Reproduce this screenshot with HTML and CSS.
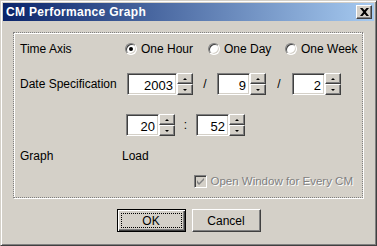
FILE: index.html
```html
<!DOCTYPE html>
<html lang="en">
<head>
    <meta charset="UTF-8">
    <title>CM Performance Graph</title>
    <link rel="stylesheet" href="styles.css">
</head>
<body>
    <div class="window">
        <div class="titlebar">
            <span class="title">CM Performance Graph</span>
            <button class="close-btn">
                <svg width="9" height="8" viewBox="0 0 9 8">
                    <path d="M0 0h2.5l2 2.2 2-2.2h2.5l-3.2 4 3.2 4h-2.5l-2-2.2-2 2.2h-2.5l3.2-4z" fill="#000"/>
                </svg>
            </button>
        </div>
        <div class="content">
            <div class="group">
                <div class="row row-axis">
                    <span class="label">Time Axis</span>
                    <span class="radio-item item-hour"><span class="radio checked"></span>One Hour</span>
                    <span class="radio-item item-day"><span class="radio"></span>One Day</span>
                    <span class="radio-item"><span class="radio"></span>One Week</span>
                </div>
                <div class="row row-date">
                    <span class="label">Date Specification</span>
                    <span class="spin">
                        <span class="edit wide">2003</span>
                        <span class="arrows"><span class="arrow up"></span><span class="arrow down"></span></span>
                    </span>
                    <span class="sep">/</span>
                    <span class="spin">
                        <span class="edit">9</span>
                        <span class="arrows"><span class="arrow up"></span><span class="arrow down"></span></span>
                    </span>
                    <span class="sep sep-day">/</span>
                    <span class="spin">
                        <span class="edit">2</span>
                        <span class="arrows"><span class="arrow up"></span><span class="arrow down"></span></span>
                    </span>
                </div>
                <div class="row row-time">
                    <span class="label"></span>
                    <span class="spin">
                        <span class="edit">20</span>
                        <span class="arrows"><span class="arrow up"></span><span class="arrow down"></span></span>
                    </span>
                    <span class="sep sep-colon">:</span>
                    <span class="spin">
                        <span class="edit">52</span>
                        <span class="arrows"><span class="arrow up"></span><span class="arrow down"></span></span>
                    </span>
                </div>
                <div class="row row-graph">
                    <span class="label">Graph</span>
                    <span>Load</span>
                </div>
                <div class="row row-check">
                    <span class="checkbox">
                        <svg width="7" height="7" viewBox="0 0 7 7">
                            <path d="M0 2v3l2 2 5-5v-2l-5 5z" fill="#808080"/>
                        </svg>
                    </span>
                    <span class="disabled-text">Open Window for Every CM</span>
                </div>
            </div>
            <div class="buttons">
                <button class="btn default"><span class="focus">OK</span></button>
                <button class="btn">Cancel</button>
            </div>
        </div>
    </div>
</body>
</html>
```

FILE: styles.css
```css
/* dialog */
body {
    margin: 0;
    font-family: "Liberation Sans", Arial, sans-serif;
    font-size: 12px;
    color: #000;
}
.window {
    width: 377px;
    height: 246px;
    box-sizing: border-box;
    background-color: #d4d0c8;
    border: 1px solid;
    border-color: #d4d0c8 #404040 #404040 #d4d0c8;
    box-shadow: inset 1px 1px #fff, inset -1px -1px #808080;
    padding: 2px;
}
.titlebar {
    height: 18px;
    display: flex;
    align-items: center;
    justify-content: space-between;
    background: linear-gradient(to right, #0a246a, #a6caf0);
    padding: 0 2px 0 3px;
}
.title {
    color: #fff;
    font-weight: bold;
    font-size: 12px;
    letter-spacing: 0.3px;
}
.close-btn {
    width: 16px;
    height: 14px;
    padding: 0;
    display: flex;
    align-items: center;
    justify-content: center;
    background-color: #d4d0c8;
    border: 1px solid;
    border-color: #fff #404040 #404040 #fff;
    box-shadow: inset -1px -1px #808080;
}
.content {
    padding: 11px 0 0 10px;
}
.group {
    width: 350px;
    height: 166px;
    box-sizing: border-box;
    border: 1px dotted #808080;
    box-shadow: inset 1px 1px #fff, 1px 1px #fff;
    padding: 8px 0 0 6px;
}
.row {
    display: flex;
    align-items: center;
}
.label {
    width: 105px;
    flex-shrink: 0;
}
.row-axis {
    height: 16px;
}
.row-date {
    height: 22px;
    margin-top: 16px;
}
.row-time {
    height: 22px;
    margin-top: 19px;
}
.row-time .label {
    width: 106px;
}
.row-date .label {
    width: 107px;
}
.row-graph {
    height: 16px;
    margin-top: 12px;
}
.row-graph .label {
    width: 102px;
}
.row-check {
    height: 14px;
    margin-top: 10px;
    justify-content: flex-end;
    padding-right: 9px;
}

/* radio buttons */
.radio-item {
    display: flex;
    align-items: center;
    gap: 4px;
}
.item-hour {
    width: 83px;
}
.item-day {
    width: 77px;
}
.radio {
    width: 10px;
    height: 10px;
    border: 1px solid;
    border-color: #808080 #fff #fff #808080;
    border-radius: 50%;
    background-color: #fff;
    box-shadow: inset 1px 1px #404040, inset -1px -1px #d4d0c8;
    position: relative;
}
.radio.checked::after {
    content: "";
    position: absolute;
    left: 3px;
    top: 3px;
    width: 4px;
    height: 4px;
    border-radius: 50%;
    background-color: #000;
}

/* spinners */
.spin {
    display: flex;
    height: 22px;
}
.edit {
    width: 33px;
    box-sizing: border-box;
    background-color: #fff;
    border: 1px solid;
    border-color: #808080 #fff #fff #808080;
    box-shadow: inset 1px 1px #404040, inset -1px -1px #d4d0c8;
    text-align: right;
    padding: 4px 3px 0 0;
    font-size: 13px;
}
.edit.wide {
    width: 50px;
}
.arrows {
    width: 16px;
    display: flex;
    flex-direction: column;
}
.arrow {
    flex: 1;
    box-sizing: border-box;
    border: 1px solid;
    border-color: #fff #404040 #404040 #fff;
    box-shadow: inset -1px -1px #808080;
    display: flex;
    align-items: center;
    justify-content: center;
}
.arrow::after {
    content: "";
    border-left: 2px solid transparent;
    border-right: 2px solid transparent;
}
.arrow.up::after {
    border-bottom: 2px solid #000;
}
.arrow.down::after {
    border-top: 2px solid #000;
}
.sep {
    width: 24px;
    text-align: center;
}
.sep-day {
    width: 26px;
}
.sep-colon {
    width: 21px;
}

/* disabled checkbox */
.checkbox {
    width: 11px;
    height: 11px;
    border: 1px solid;
    border-color: #808080 #fff #fff #808080;
    box-shadow: inset 1px 1px #404040, inset -1px -1px #d4d0c8;
    background-color: #d4d0c8;
    display: flex;
    align-items: center;
    justify-content: center;
    margin-right: 3px;
}
.disabled-text {
    color: #808080;
    text-shadow: 1px 1px #fff;
    font-size: 11.5px;
}

/* buttons */
.buttons {
    display: flex;
    justify-content: center;
    gap: 6px;
    margin: 11px 0 0 -10px;
}
.btn {
    width: 69px;
    height: 23px;
    padding: 0;
    font-family: inherit;
    font-size: 12px;
    color: #000;
    background-color: #d4d0c8;
    border: 1px solid;
    border-color: #fff #404040 #404040 #fff;
    box-shadow: inset -1px -1px #808080;
}
.btn.default {
    border: 1px solid #000;
    box-shadow: inset 1px 1px #fff, inset -1px -1px #404040, inset -2px -2px #808080;
    display: flex;
    padding: 3px;
}
.focus {
    flex: 1;
    border: 1px dotted #000;
    display: flex;
    align-items: center;
    justify-content: center;
}
```
